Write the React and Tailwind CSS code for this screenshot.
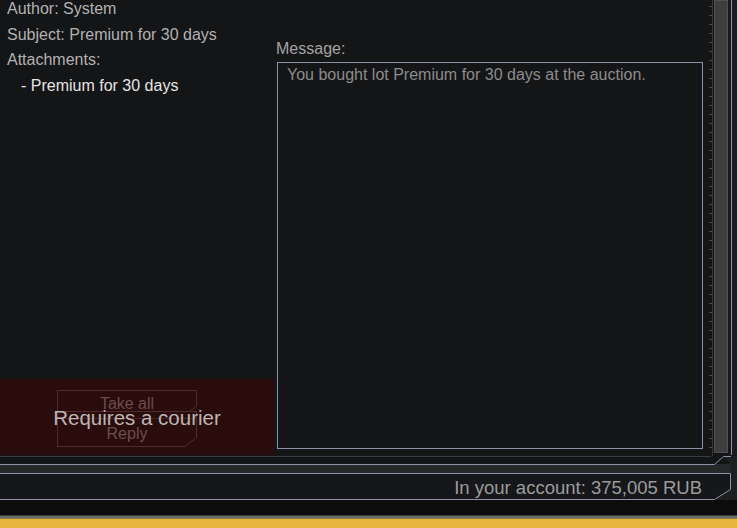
const FONT = { fontFamily: '"Liberation Sans", Arial, sans-serif' };

const LAV = "#9090ab";

function Ticks() {
  const marks = Array.from({ length: 50 }, (_, i) => i);
  return (
    <div className="flex w-[3px] flex-col">
      {marks.map((i) => (
        <div key={i} className="mt-[8px] h-px w-[3px] bg-[#4a4a4a] first:mt-[6px]" />
      ))}
    </div>
  );
}

function ScrollColumn() {
  return (
    <div className="flex h-full w-[34px] shrink-0">
      <div className="w-[6px]" />
      <Ticks />
      <div className="h-[458px] w-px bg-[#36383b]" />
      <div className="w-px" />
      <div className="h-[453px] w-[14px] border border-[#505050] bg-[#3e3e3e]" />
      <div className="w-[3px] bg-[#17181a]" />
      <div className="h-[455px] w-px bg-[#9090ab]" />
      <div className="w-[5px] bg-[#1c1d1f]" />
    </div>
  );
}

function CourierPanel() {
  return (
    <div className="relative h-[76px] w-[274px] bg-[#2a0c0d]">
      <svg className="absolute left-0 top-0" width="274" height="76" viewBox="0 379 274 76">
        <path
          d="M57.5 447.5 V390.5 H196.5 V406.5 L189 411.5 H57.5"
          fill="none"
          stroke="#4e2b2c"
          strokeWidth="1"
        />
        <path
          d="M57.5 411.5 H196.5 V437.5 L185 446.5 H57.5"
          fill="none"
          stroke="#4e2b2c"
          strokeWidth="1"
        />
        <path d="M57.5 418.5 H196.5" stroke="#452626" strokeWidth="1" />
      </svg>
      <div className="absolute left-[57px] top-[14px] w-[140px] text-center text-[16px] leading-[22px] text-[#6a4d4d]">
        Take all
      </div>
      <div className="absolute left-[57px] top-[44px] w-[140px] text-center text-[16px] leading-[22px] text-[#6a4d4d]">
        Reply
      </div>
      <div className="absolute inset-x-0 top-[26px] text-center text-[20.5px] leading-[26px] text-[#bdb6b4]">
        Requires a courier
      </div>
    </div>
  );
}

function BottomFrame() {
  return (
    <div className="relative h-[73px] w-full">
      <div className="h-[8px] bg-[#141517]">
        <div className="mt-px h-px w-[711px] bg-[#3b3c3e]" />
      </div>
      <div className="h-[9px] bg-[#27282a]" />
      <div className="flex h-[26px] items-center justify-end bg-[#16171a] pr-[35px] pt-[4px] text-[18.5px] leading-none text-[#9c9c9c]">
        In your account: 375,005 RUB
      </div>
      <div className="h-[16px] bg-[#0c0c0d]" />
      <div className="h-px bg-[#3a3a3a]" />
      <div className="h-[2px] bg-[#6b6b68]" />
      <div className="h-px bg-[#8a7a4a]" />
      <div className="h-[10px] bg-[#e8b53d]" />
      <svg className="absolute left-0 top-0" width="737" height="73" viewBox="0 455 737 73">
        <path d="M723 455 H737 V499 H715 L731 489 V464 Z" fill="#1e1f21" />
        <path d="M0 463.5 H714.5 L723.5 455.5 H731" fill="none" stroke={LAV} strokeWidth="1" />
        <path d="M0 472.5 H730.5 V488.5 L714.5 498.5 H0" fill="none" stroke={LAV} strokeWidth="1" />
      </svg>
    </div>
  );
}

export default function App() {
  return (
    <div className="h-[528px] w-[737px] overflow-hidden bg-[#141517]" style={FONT}>
      <div className="flex h-[455px]">
        {/* Left: mail details */}
        <div className="flex w-[274px] shrink-0 flex-col">
          <div className="-mt-1 pl-[7px] text-[16px] leading-[25.5px] text-[#b2b2b2]">
            <div>Author: System</div>
            <div>Subject: Premium for 30 days</div>
            <div>Attachments:</div>
            <div className="pl-[14px] text-[#e4e4e4]">- Premium for 30 days</div>
          </div>
          <div className="flex-1" />
          <CourierPanel />
        </div>

        {/* Middle: message */}
        <div className="ml-[2px] flex w-[427px] shrink-0 flex-col">
          <div className="mt-[39px] h-[23px] text-[16px] leading-[20px] text-[#a4a4a4]">Message:</div>
          <div className="ml-px h-[387px] w-[426px] border border-[#9090ab] px-[9px] pt-[1px] text-[16px] leading-[22px] text-[#8c8c8c]">
            You bought lot Premium for 30 days at the auction.
          </div>
        </div>

        <ScrollColumn />
      </div>
      <BottomFrame />
    </div>
  );
}
